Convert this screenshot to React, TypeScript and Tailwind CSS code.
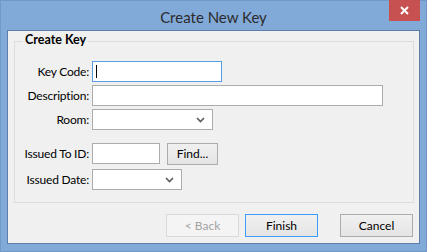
const Chevron = () => (
    <svg width="9" height="6" viewBox="0 0 9 6" className="shrink-0">
        <polyline points="1,1 4.5,4.5 8,1" fill="none" stroke="#5a5a5a" strokeWidth="1.6" />
    </svg>
);

const Field = ({ label, children, className = '' }: { label: string; children: React.ReactNode; className?: string }) => (
    <div className={`flex items-center gap-[3px] h-[21px] ${className}`}>
        <span className="w-[74px] text-right leading-none tracking-[-0.2px]">{label}</span>
        {children}
    </div>
);

const Select = ({ width }: { width: string }) => (
    <div className={`${width} h-[21px] bg-white border border-[#acacac] flex items-center justify-end pr-[7px]`}>
        <Chevron />
    </div>
);

const App = () => {
    return (
        <div
            className="w-[427px] h-[252px] bg-[#82aad8] border border-[#7098c8] flex flex-col text-[12px] text-black"
            style={{ fontFamily: '"Segoe UI", Lato, "Noto Sans", sans-serif' }}
        >
            <div className="relative h-[29px] flex items-center justify-center">
                <span className="text-[15px] text-[#2b2b2b] pt-[3px]">Create New Key</span>
                <div className="absolute top-[-1px] right-[6px] w-[31px] h-[21px] bg-[#c75050] flex items-center justify-center">
                    <svg width="9" height="9" viewBox="0 0 9 9">
                        <path d="M1 1 L8 8 M8 1 L1 8" stroke="#fff" strokeWidth="2" />
                    </svg>
                </div>
            </div>

            <div className="mx-[6px] h-[214px] bg-[#f0f0f0] border border-[#5d7eab] flex flex-col">
                <div className="relative ml-[6px] mt-[10px] w-[400px] h-[162px] border border-[#dcdcdc] flex flex-col pt-[19px]">
                    <span className="absolute left-[8px] top-[-8px] bg-[#f0f0f0] px-[2px] font-bold leading-none text-[12.5px]">Create Key</span>

                    <div className="flex flex-col gap-[3px]">
                        <Field label="Key Code:">
                            <div className="w-[130px] h-[21px] bg-white border border-[#569de5] flex items-center pl-[3px]">
                                <span className="w-px h-[13px] bg-black" />
                            </div>
                        </Field>
                        <Field label="Description:">
                            <div className="w-[291px] h-[21px] bg-white border border-[#acacac]" />
                        </Field>
                        <Field label="Room:">
                            <Select width="w-[121px]" />
                        </Field>
                    </div>

                    <div className="flex flex-col gap-[5px] mt-[13px]">
                        <Field label="Issued To ID:">
                            <div className="w-[68px] h-[21px] bg-white border border-[#acacac]" />
                            <button className="ml-[4px] w-[51px] h-[22px] border border-[#acacac] bg-gradient-to-b from-[#f0f0f0] to-[#e5e5e5] leading-none">
                                Find...
                            </button>
                        </Field>
                        <Field label="Issued Date:">
                            <Select width="w-[90px]" />
                        </Field>
                    </div>
                </div>

                <div className="flex justify-end items-center mt-[11px] pr-[6px]">
                    <button className="w-[73px] h-[23px] border border-[#d9d9d9] bg-[#f4f4f4] text-[#a3a3a3] leading-none">
                        &lt; Back
                    </button>
                    <button className="ml-[6px] w-[73px] h-[23px] border border-[#3c9bff] bg-gradient-to-b from-[#f0f0f0] to-[#e5e5e5] leading-none">
                        Finish
                    </button>
                    <button className="ml-[22px] w-[73px] h-[23px] border border-[#acacac] bg-gradient-to-b from-[#f0f0f0] to-[#e5e5e5] leading-none">
                        Cancel
                    </button>
                </div>
            </div>
        </div>
    );
};

export default App;
